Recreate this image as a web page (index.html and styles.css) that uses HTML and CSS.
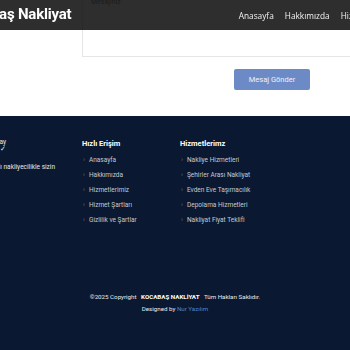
FILE: index.html
```html
<!DOCTYPE html>
<html lang="tr">
<head>
  <meta charset="UTF-8" />
  <title>İletişim - Kocabaş Nakliyat</title>
  <link rel="stylesheet" href="styles.css">
</head>
<body>
  <div class="shell">
    <header class="topbar">
      <div class="brand">Kocabaş Nakliyat</div>
      <nav class="nav">
        <a href="#">Anasayfa</a>
        <a href="#">Hakkımızda</a>
        <a href="#">Hizmetlerimiz</a>
      </nav>
    </header>

    <section class="contact">
      <div class="form-box">
        <label class="form-label">Mesajınız</label>
      </div>
      <div class="form-actions">
        <button class="send-btn">Mesaj Gönder</button>
      </div>
    </section>

    <footer class="footer">
      <div class="footer-cols">
        <div class="footer-about">
          <div class="about-line">Taşınmak artık kolay</div>
          <div class="about-line">Güvenli ve hızlı ✓</div>
          <p>Yılların tecrübesi ve başarılı nakliyecilikle sizin<br>yanınızdayız.</p>
        </div>
        <div class="footer-col">
          <h4>Hızlı Erişim</h4>
          <ul>
            <li><a href="#">Anasayfa</a></li>
            <li><a href="#">Hakkımızda</a></li>
            <li><a href="#">Hizmetlerimiz</a></li>
            <li><a href="#">Hizmet Şartları</a></li>
            <li><a href="#">Gizlilik ve Şartlar</a></li>
          </ul>
        </div>
        <div class="footer-col">
          <h4>Hizmetlerimz</h4>
          <ul>
            <li><a href="#">Nakliye Hizmetleri</a></li>
            <li><a href="#">Şehirler Arası Nakliyat</a></li>
            <li><a href="#">Evden Eve Taşımacılık</a></li>
            <li><a href="#">Depolama Hizmetleri</a></li>
            <li><a href="#">Nakliyat Fiyat Teklifi</a></li>
          </ul>
        </div>
      </div>

      <div class="copyright">
        <div>©2025 Copyright <strong>KOCABAŞ NAKLİYAT</strong> Tüm Hakları Saklıdır.</div>
        <div class="credits">Designed by <a href="#">Nur Yazılım</a></div>
      </div>
    </footer>
  </div>
</body>
</html>
```

FILE: styles.css
```css
body {
  margin: 0;
  width: 350px;
  height: 350px;
  overflow: hidden;
  background: #fff;
  font-family: Roboto, 'Liberation Sans', sans-serif;
}

.shell {
  width: 510px;
  margin-left: -80px;
}

/* header sits over the page */
.topbar {
  position: fixed;
  top: 0;
  width: 510px;
  height: 30px;
  background: rgba(0, 0, 0, 0.82);
  display: flex;
  align-items: center;
  justify-content: space-between;
  padding-left: 38px;
  box-sizing: border-box;
  z-index: 10;
}

.brand {
  color: #fff;
  font-weight: 700;
  font-size: 15px;
  letter-spacing: -0.2px;
  padding-bottom: 2px;
}

.nav {
  display: flex;
  gap: 11px;
  padding-right: 36px;
}

.nav a {
  color: #f2f2f2;
  text-decoration: none;
  font-family: 'Open Sans', sans-serif;
  font-size: 8.3px;
}

.contact {
  padding-left: 162px;
}

.form-box {
  margin-top: -20px;
  height: 76px;
  border: 1px solid #e6e6e6;
  border-top: none;
  border-right: none;
}

.form-label {
  display: block;
  padding: 18px 0 0 8px;
  font-size: 7px;
  color: #999;
}

.form-actions {
  padding: 10px 0 26px 152px;
}

.send-btn {
  width: 76px;
  height: 21px;
  background: #6c8bc6;
  color: #eef2f9;
  border: none;
  border-radius: 2px;
  font-family: Roboto, sans-serif;
  font-size: 7.5px;
  padding: 0;
}

.footer {
  background: #0a1931;
  color: #c4c9d2;
  height: 240px;
  padding-top: 23px;
  box-sizing: border-box;
}

.footer-cols {
  display: grid;
  grid-template-columns: 162px 98px 1fr;
}

.footer-about {
  display: flex;
  flex-direction: column;
  align-items: flex-end;
  font-size: 6.5px;
  color: #e6e9ee;
}

.about-line {
  padding-right: 76px;
  line-height: 7px;
}

.footer-about p {
  margin: 9px 0 0;
  padding-right: 27px;
  white-space: nowrap;
  line-height: 10px;
}

.footer-col h4 {
  margin: 0 0 5px;
  color: #fff;
  font-size: 7.5px;
  font-weight: 700;
}

.footer-col ul {
  list-style: none;
  margin: 0;
  padding: 0;
}

.footer-col li {
  height: 15px;
  line-height: 15px;
  font-size: 6.5px;
}

.footer-col li::before {
  content: '›';
  color: #5f6a7c;
  margin: 0 4px 0 1px;
}

.footer-col a {
  color: #c4c9d2;
  text-decoration: none;
}

.copyright {
  margin-top: 65px;
  text-align: center;
  font-size: 6.2px;
  color: #e6e9ee;
}

.copyright strong {
  color: #fff;
  margin: 0 3px;
}

.credits {
  margin-top: 4px;
}

.credits a {
  color: #4f82d2;
  text-decoration: none;
}
```
